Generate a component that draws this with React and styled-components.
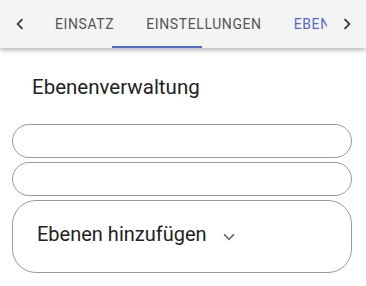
import React from 'react'
import styled, { createGlobalStyle } from 'styled-components'

const GlobalStyle = createGlobalStyle`
  html, body {
    margin: 0;
    padding: 0;
    background: #ffffff;
    font-family: Roboto, "Liberation Sans", sans-serif;
  }
`;

const tabs = [
  { label: "Einsatz" },
  { label: "Einstellungen" },
  { label: "Ebenen", active: true },
];

function App() {
  return (
    <Page>
      <GlobalStyle />
      <TabBar>
        <Arrow aria-label="zurück">
          <svg width="22" height="22" viewBox="0 0 24 24">
            <path d="M15.4 7.4 14 6l-6 6 6 6 1.4-1.4L10.8 12z" fill="#3a3a3a" />
          </svg>
        </Arrow>
        <TabScroller>
          <TabRow>
            {tabs.map((t) => (
              <Tab key={t.label} $active={t.active}>{t.label}</Tab>
            ))}
          </TabRow>
          <Indicator />
        </TabScroller>
        <Arrow aria-label="weiter">
          <svg width="22" height="22" viewBox="0 0 24 24">
            <path d="M8.6 16.6 10 18l6-6-6-6-1.4 1.4 4.6 4.6z" fill="#3a3a3a" />
          </svg>
        </Arrow>
      </TabBar>

      <Content>
        <Title>Ebenenverwaltung</Title>
        <List>
          <Pill />
          <Pill />
          <Panel>
            <PanelTitle>Ebenen hinzufügen</PanelTitle>
            <Chevron width="24" height="24" viewBox="0 0 24 24">
              <path d="M7.4 8.6 12 13.2l4.6-4.6L17.4 10 12 15.4 6.6 10z" fill="#666" />
            </Chevron>
          </Panel>
        </List>
      </Content>
    </Page>
  )
}

export default App

const Page = styled.div`
  width: 366px;
  height: 286px;
  overflow: hidden;
  background: #ffffff;
`;

const TabBar = styled.div`
  display: flex;
  align-items: stretch;
  height: 48px;
  background: #f4f4f4;
  box-shadow: 0 2px 5px rgba(0, 0, 0, 0.3);
  position: relative;
  z-index: 1;
`;

const Arrow = styled.div`
  width: 39px;
  flex: none;
  display: flex;
  align-items: center;
  justify-content: center;
`;

const TabScroller = styled.div`
  flex: 1;
  position: relative;
  overflow: hidden;
`;

const TabRow = styled.div`
  display: flex;
  height: 100%;
`;

const Tab = styled.div`
  flex: none;
  display: flex;
  align-items: center;
  padding: 0 16px;
  font-size: 14px;
  font-weight: 400;
  letter-spacing: 0.6px;
  text-transform: uppercase;
  color: ${(p) => (p.$active ? "#5468d4" : "#555")};
`;

const Indicator = styled.div`
  position: absolute;
  left: 73px;
  bottom: 0;
  width: 90px;
  height: 2px;
  background: #5468d4;
`;

const Content = styled.div`
  padding: 25px 14px 0 12px;
`;

const Title = styled.h2`
  margin: 0 0 23px 20px;
  font-size: 20.5px;
  font-weight: 400;
  line-height: 28px;
  color: #222;
`;

const List = styled.div`
  display: flex;
  flex-direction: column;
  gap: 4px;
`;

const Pill = styled.div`
  height: 32px;
  border: 1px solid #9a9a9a;
  border-radius: 17px;
`;

const Panel = styled.div`
  height: 71px;
  box-sizing: border-box;
  height: 73px;
  border: 1px solid #9a9a9a;
  border-radius: 24px;
  display: flex;
  align-items: center;
  gap: 10px;
  padding: 0 0 5px 24px;
`;

const PanelTitle = styled.div`
  font-size: 20px;
  font-weight: 400;
  color: #222;
`;

const Chevron = styled.svg`
  margin-top: 6px;
`;
